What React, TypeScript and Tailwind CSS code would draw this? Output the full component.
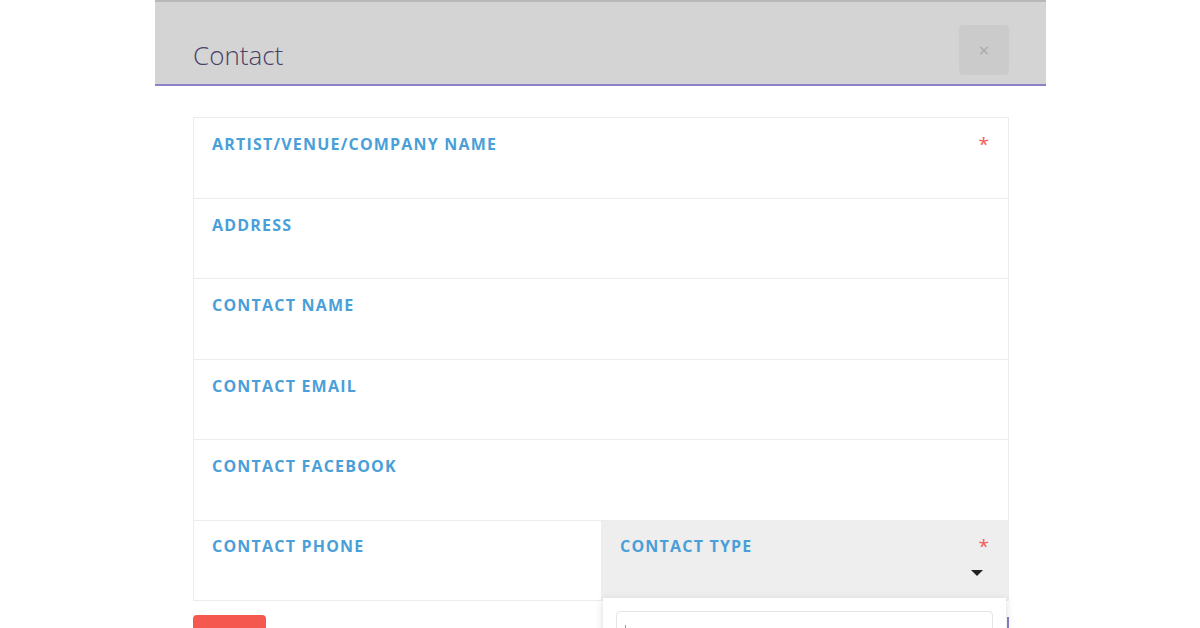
import React from 'react';

const fields = [
  { label: 'ARTIST/VENUE/COMPANY NAME', required: true },
  { label: 'ADDRESS' },
  { label: 'CONTACT NAME' },
  { label: 'CONTACT EMAIL' },
  { label: 'CONTACT FACEBOOK' },
];

function Label({ text }: { text: string }) {
  return (
    <div className="text-[16px] font-bold leading-5 tracking-[1.2px] text-[#4a9fd8] [font-family:'Open_Sans',sans-serif]">
      {text}
    </div>
  );
}

function Star() {
  return <span className="text-[19px] leading-5 text-[#f55a55] [font-family:'Open_Sans',sans-serif]">*</span>;
}

export default function App() {
  return (
    <div className="h-[628px] w-[1200px] overflow-hidden bg-white">
      <div className="ml-[155px] w-[891px]">
        <div className="flex h-[86px] items-start justify-between border-t-2 border-b-2 border-t-[#b8b8b8] border-b-[#8e80c8] bg-[#d4d4d4] pl-[38px] pr-[37px]">
          <h1 className="mt-[37px] text-[26px] font-light leading-8 text-[#4a4166] [font-family:'Open_Sans',sans-serif]">Contact</h1>
          <button className="mt-[23px] flex h-[50px] w-[50px] items-center justify-center rounded bg-[#cbcbcb] text-[19px] text-[#a9a9a9] [font-family:'Open_Sans',sans-serif]">
            ×
          </button>
        </div>

        <div className="px-[38px] pt-[31px]">
          <div className="w-[816px] border border-[#ececec]">
            {fields.map((f) => (
              <div key={f.label} className="flex h-[80.5px] justify-between border-b border-[#ececec] pl-[18px] pr-[19px] pt-[16px]">
                <Label text={f.label} />
                {f.required && <Star />}
              </div>
            ))}
            <div className="flex h-[79px]">
              <div className="w-[408px] border-r border-[#ececec] pl-[18px] pt-[15px]">
                <Label text="CONTACT PHONE" />
              </div>
              <div className="relative flex flex-1 flex-col bg-[#eeeeee] pl-[18px] pr-[19px] pt-[15px]">
                <div className="flex justify-between">
                  <Label text="CONTACT TYPE" />
                  <Star />
                </div>
                <div className="mt-[14px] flex justify-end pr-[6px]">
                  <div className="h-0 w-0 border-x-[6px] border-t-[6px] border-x-transparent border-t-[#222]" />
                </div>
                <div className="absolute left-[1px] top-[77px] z-10 h-[60px] w-[403px] bg-white px-[13px] pt-[13px] shadow-[0_2px_8px_rgba(0,0,0,0.15)]">
                  <div className="h-[40px] rounded-sm border border-[#e5e5e5] pl-[8px] pt-[13px]">
                    <div className="h-[8px] w-px bg-[#999]" />
                  </div>
                </div>
              </div>
            </div>
          </div>

          <div className="mt-[14px] flex justify-between">
            <div className="h-[30px] w-[73px] rounded bg-[#f5584f]" />
            <div className="mr-[-1px] mt-[2px] h-[20px] w-[2px] bg-[#8e80c8]" />
          </div>
        </div>
      </div>
    </div>
  );
}
